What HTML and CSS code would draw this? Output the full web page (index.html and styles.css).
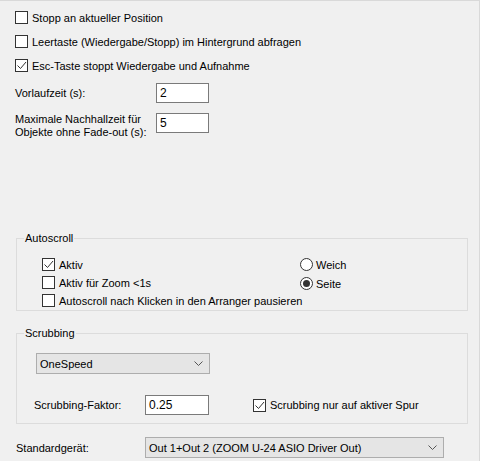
FILE: index.html
```html
<!DOCTYPE html>
<html lang="de">
<head>
  <meta charset="UTF-8">
  <title>Wiedergabe-Einstellungen</title>
  <link rel="stylesheet" href="styles.css">
</head>
<body>
  <div class="panel">
    <label class="check"><span class="box"></span>Stopp an aktueller Position</label>
    <label class="check"><span class="box"></span>Leertaste (Wiedergabe/Stopp) im Hintergrund abfragen</label>
    <label class="check"><span class="box checked"><svg width="11" height="11" viewBox="0 0 11 11"><path d="M1.5 5.5 L4.5 8.5 L10 2" fill="none" stroke="#333" stroke-width="1"/></svg></span>Esc-Taste stoppt Wiedergabe und Aufnahme</label>

    <div class="field field-first">
      <span class="field-label">Vorlaufzeit (s):</span>
      <span class="textbox">2</span>
    </div>
    <div class="field">
      <span class="field-label">Maximale Nachhallzeit für<br>Objekte ohne Fade-out (s):</span>
      <span class="textbox">5</span>
    </div>

    <fieldset class="group autoscroll">
      <legend>Autoscroll</legend>
      <div class="group-body group-cols">
        <div class="col">
          <label class="check tight"><span class="box checked"><svg width="11" height="11" viewBox="0 0 11 11"><path d="M1.5 5.5 L4.5 8.5 L10 2" fill="none" stroke="#333" stroke-width="1"/></svg></span>Aktiv</label>
          <label class="check tight"><span class="box"></span>Aktiv für Zoom &lt;1s</label>
          <label class="check tight last"><span class="box"></span>Autoscroll nach Klicken in den Arranger pausieren</label>
        </div>
        <div class="radios">
          <label class="radio"><span class="dot"></span>Weich</label>
          <label class="radio"><span class="dot on"></span>Seite</label>
        </div>
      </div>
    </fieldset>

    <fieldset class="group scrubbing">
      <legend>Scrubbing</legend>
      <div class="group-body">
        <div class="combo combo-small">OneSpeed<svg class="chev" width="9" height="5" viewBox="0 0 9 5"><path d="M0.5 0.5 L4.5 4.5 L8.5 0.5" fill="none" stroke="#555" stroke-width="1"/></svg></div>
        <div class="scrub-row">
          <span class="scrub-label">Scrubbing-Faktor:</span>
          <span class="textbox wide">0.25</span>
          <label class="check tight"><span class="box checked"><svg width="11" height="11" viewBox="0 0 11 11"><path d="M1.5 5.5 L4.5 8.5 L10 2" fill="none" stroke="#333" stroke-width="1"/></svg></span>Scrubbing nur auf aktiver Spur</label>
        </div>
      </div>
    </fieldset>

    <div class="device-row">
      <span class="device-label">Standardgerät:</span>
      <div class="combo combo-large">Out 1+Out 2 (ZOOM U-24 ASIO Driver Out)<svg class="chev" width="9" height="5" viewBox="0 0 9 5"><path d="M0.5 0.5 L4.5 4.5 L8.5 0.5" fill="none" stroke="#555" stroke-width="1"/></svg></div>
    </div>
  </div>
</body>
</html>
```

FILE: styles.css
```css
html, body {
  margin: 0;
  padding: 0;
}

body {
  width: 480px;
  height: 461px;
  box-sizing: border-box;
  background-color: #f0f0f0;
  border-top: 1px solid #d9d9d9;
  border-right: 1px solid #d9d9d9;
  font-family: "Liberation Sans", Arial, sans-serif;
  font-size: 11px;
  color: #000;
  overflow: hidden;
}

.panel {
  padding: 10px 0 0 15px;
}

.check {
  display: flex;
  align-items: center;
  height: 13px;
  margin-bottom: 11px;
  white-space: nowrap;
}

.check.tight {
  margin-bottom: 5px;
}

.check.last {
  margin-bottom: 3px;
}

.box {
  width: 13px;
  height: 13px;
  box-sizing: border-box;
  border: 1px solid #333;
  background-color: #fff;
  margin-right: 4px;
  flex-shrink: 0;
  display: flex;
  align-items: center;
  justify-content: center;
}

.field {
  display: flex;
  align-items: flex-start;
  margin-top: 10px;
}

.field-first {
  margin-top: 5px;
  align-items: center;
}

.field-label {
  width: 141px;
  line-height: 13px;
}

.textbox {
  display: block;
  width: 53px;
  height: 20px;
  box-sizing: border-box;
  border: 1px solid #7a7a7a;
  background-color: #fff;
  padding: 2px 3px;
  font-size: 12px;
  line-height: 15px;
}

.textbox.wide {
  width: 64px;
}

.group {
  margin: 0 0 0 1px;
  border: 1px solid #dcdcdc;
  padding: 0;
  width: 452px;
  box-sizing: border-box;
}

.group legend {
  padding: 0 1px;
  margin-left: 7px;
  line-height: 13px;
}

.autoscroll {
  margin-top: 93px;
}

.autoscroll .group-body {
  padding: 13px 0 0 25px;
}

.group-cols {
  display: flex;
}

.col {
  width: 258px;
}

.radio {
  display: flex;
  align-items: center;
  height: 13px;
  margin-bottom: 6px;
}

.dot {
  width: 13px;
  height: 13px;
  box-sizing: border-box;
  border: 1px solid #333;
  border-radius: 50%;
  background-color: #fff;
  margin-right: 3px;
  position: relative;
}

.dot.on::after {
  content: "";
  position: absolute;
  left: 2px;
  top: 2px;
  width: 7px;
  height: 7px;
  border-radius: 50%;
  background-color: #333;
}

.scrubbing {
  margin-top: 16px;
}

.scrubbing .group-body {
  padding: 13px 0 8px 19px;
}

.combo {
  display: flex;
  align-items: center;
  justify-content: space-between;
  height: 21px;
  box-sizing: border-box;
  border: 1px solid #adadad;
  background-color: #e5e5e5;
  padding: 0 6px 0 3px;
}

.combo-small {
  width: 174px;
}

.combo-large {
  width: 299px;
}

.scrub-row {
  display: flex;
  align-items: center;
  margin-top: 21px;
}

.scrub-label {
  width: 111px;
  margin-left: -2px;
}

.scrub-row .textbox {
  margin-right: 44px;
}

.scrub-row .check {
  margin-bottom: 0;
}

.device-row {
  display: flex;
  align-items: center;
  margin-top: 13px;
}

.device-label {
  width: 129px;
  margin-left: 1px;
}
```
